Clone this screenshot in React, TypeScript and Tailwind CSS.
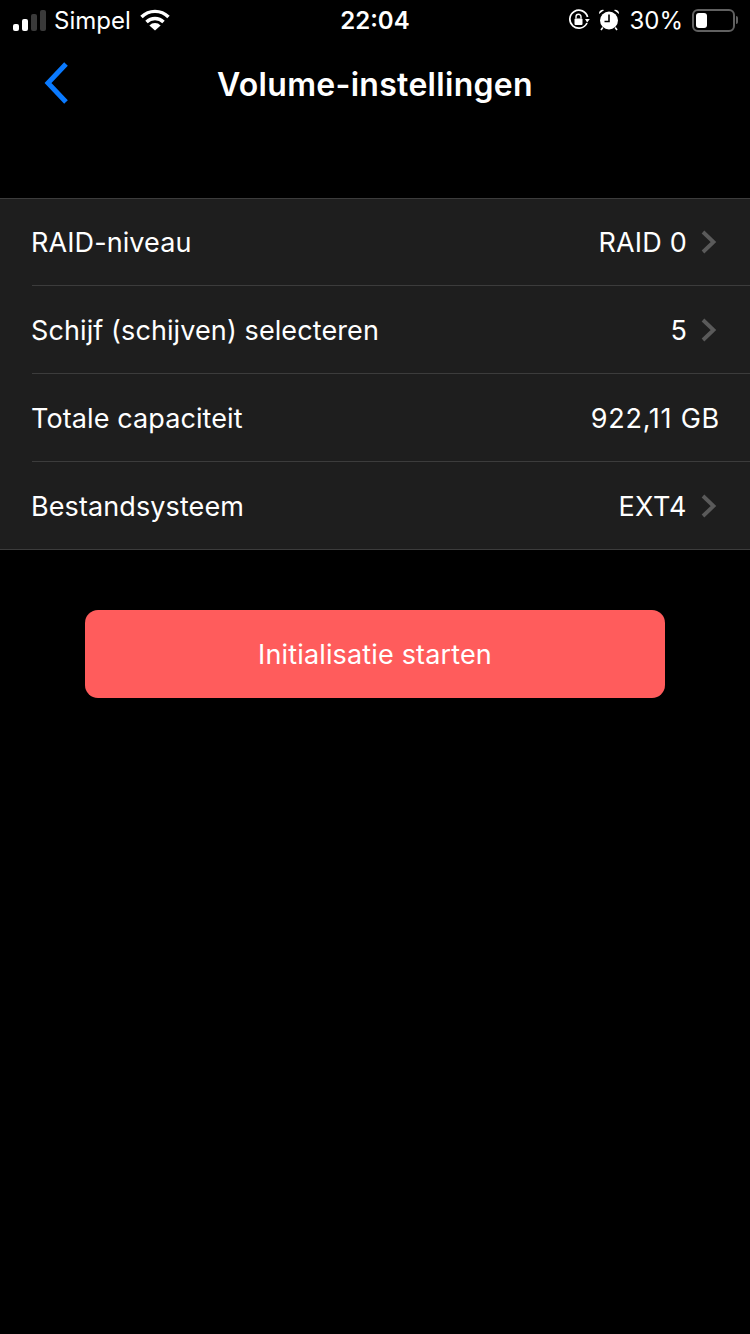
const font = "font-['Inter','Liberation_Sans',sans-serif]";

function Chevron() {
  return (
    <svg width="18" height="24" viewBox="0 0 18 24" className="ml-[13px] mr-[2px]" fill="none">
      <path d="M3 2 L13.5 12 L3 22" stroke="#5a5a5a" strokeWidth="3.8" />
    </svg>
  );
}

function StatusBar() {
  return (
    <div className="relative flex h-[40px] items-center justify-between text-white">
      <div className="flex items-center pl-[13px]">
        <div className="flex items-end gap-[3px]">
          <div className="h-[7px] w-[6px] rounded-[2px] bg-white" />
          <div className="h-[12px] w-[6px] rounded-[2px] bg-white" />
          <div className="h-[17px] w-[6px] rounded-[2px] bg-[#3a3a3a]" />
          <div className="h-[21px] w-[6px] rounded-[2px] bg-[#3a3a3a]" />
        </div>
        <span className="ml-[8px] pt-[2px] text-[24px] leading-none">Simpel</span>
        <svg width="30" height="22" viewBox="0 0 30 22" className="ml-[9px]" fill="none">
          <path d="M1.5 8 A19 19 0 0 1 28.5 8" stroke="#fff" strokeWidth="3.4" />
          <path d="M6.5 13 A12 12 0 0 1 23.5 13" stroke="#fff" strokeWidth="3.4" />
          <path d="M15 21.5 L9.4 16.4 A7.8 7.8 0 0 1 20.6 16.4 Z" fill="#fff" />
        </svg>
      </div>
      <span className="absolute left-0 right-0 pt-[2px] text-center text-[24px] font-semibold leading-none">22:04</span>
      <div className="flex items-center pr-[12px]">
        <svg width="22" height="22" viewBox="0 0 22 22" fill="none">
          <path d="M19 14 A9 9 0 1 1 19.6 8" stroke="#fff" strokeWidth="1.7" />
          <path d="M17 10 L21.8 10 L19.2 13.6 Z" fill="#fff" />
          <rect x="6.5" y="9.5" width="8" height="6.5" rx="1" fill="#fff" />
          <path d="M8 9.5 V7.8 A2.5 2.5 0 0 1 13 7.8 V9.5" stroke="#fff" strokeWidth="1.4" />
        </svg>
        <svg width="22" height="22" viewBox="0 0 22 22" className="ml-[8px]" fill="none">
          <circle cx="11" cy="11.5" r="9" fill="#fff" />
          <path d="M11 5.5 V12.5 H6.5" stroke="#000" strokeWidth="1.6" />
          <path d="M1 5 A3.8 3.8 0 0 1 6.2 1 Z M21 5 A3.8 3.8 0 0 0 15.8 1 Z" fill="#fff" />
          <path d="M4.8 18.5 L3 21 M17.2 18.5 L19 21" stroke="#fff" strokeWidth="1.6" />
        </svg>
        <span className="ml-[9px] pt-[2px] text-[24px] leading-none">30%</span>
        <div className="ml-[9px] flex items-center">
          <div className="flex h-[23px] w-[43px] items-center rounded-[6px] border-2 border-[#606060] pl-[2px]">
            <div className="h-[15px] w-[11px] rounded-[3px] bg-white" />
          </div>
          <div className="ml-[1px] h-[8px] w-[2px] rounded-r-[2px] bg-[#606060]" />
        </div>
      </div>
    </div>
  );
}

function Row({ label, value, arrow, height, last, valueClass }: { label: string; value: string; arrow?: boolean; height: string; last?: boolean; valueClass?: string }) {
  return (
    <div className="pl-[32px]">
      <div className={"flex items-center justify-between pr-[30px] " + height + (last ? "" : " border-b border-[#3c3c3c]")}>
        <span className="-ml-[1px] pt-[3px] text-[27px] tracking-[0.1px] text-white">{label}</span>
        <div className="flex items-center">
          <span className={"pt-[3px] text-[27px] text-white " + (valueClass ?? "tracking-[0.2px]")}>{value}</span>
          {arrow && <Chevron />}
        </div>
      </div>
    </div>
  );
}

export default function App() {
  return (
    <div className={"min-h-[1334px] w-[750px] bg-black " + font}>
      <StatusBar />
      <div className="relative flex h-[88px] items-center justify-center">
        <svg width="30" height="44" viewBox="0 0 30 44" className="absolute left-[42px] top-[21px]" fill="none">
          <path d="M24 3 L6 22 L24 41" stroke="#0a7aff" strokeWidth="5" />
        </svg>
        <h1 className="pt-[2px] text-[32px] font-semibold tracking-[0.3px] text-white">Volume-instellingen</h1>
      </div>
      <div className="mt-[70px] border-y border-[#3c3c3c] bg-[#1e1e1e]">
        <Row label="RAID-niveau" value="RAID 0" arrow height="h-[87px]" />
        <Row label="Schijf (schijven) selecteren" value="5" arrow height="h-[88px]" />
        <Row label="Totale capaciteit" value="922,11 GB" height="h-[88px]" valueClass="tracking-[0.75px]" />
        <Row label="Bestandsysteem" value="EXT4" arrow height="h-[87px]" last valueClass="tracking-[0.5px]" />
      </div>
      <div className="mt-[60px] flex justify-center">
        <button className="h-[88px] w-[580px] rounded-[13px] bg-[#ff5c5c] pt-[2px] text-[27px] tracking-[0.15px] text-white">Initialisatie starten</button>
      </div>
    </div>
  );
}
